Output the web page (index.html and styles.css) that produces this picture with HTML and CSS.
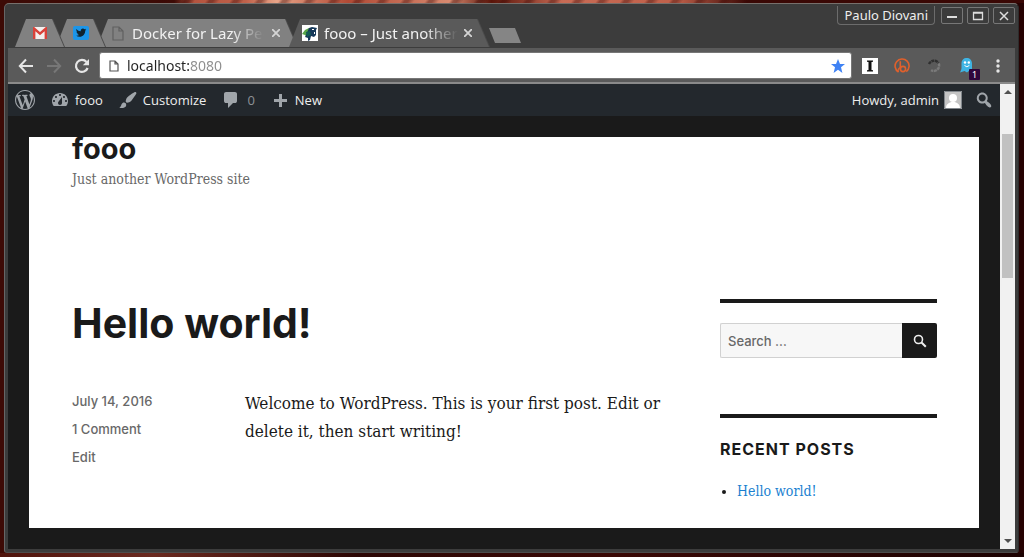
FILE: index.html
```
<!DOCTYPE html>
<html lang="en">
<head>
<meta charset="utf-8">
<meta name="viewport" content="width=device-width, initial-scale=1">
<title>fooo – Just another WordPress site</title>
<link rel="stylesheet" href="styles.css">
</head>
<body class="desktop">
<div class="window">
  <header class="titlebar">
    <ul class="tabs">
      <li class="tab tab-pinned"><a class="tab-shape" href="#" aria-label="Gmail">
        <svg width="14" height="12" viewBox="0 0 14 12"><rect width="14" height="12" rx="1" fill="#f3f0ee"/><path d="M1.2 12V1.6L7 6.6l5.800-5V12" fill="none" stroke="#d9423a" stroke-width="2.400"/></svg>
      </a></li>
      <li class="tab tab-pinned"><a class="tab-shape" href="#" aria-label="Twitter">
        <svg width="16" height="14" viewBox="0 0 16 14"><rect width="16" height="14" rx="2" fill="#1c95e8"/><path d="M3.400 3c1.200 1.400 2.700 2.200 4.400 2.300C7.500 3.500 8.700 2.500 9.900 2.500c.7 0 1.200.3 1.600.7l1.400-.5-.7 1.100 1.100-.2-1.100 1.200c.1 3.300-2.300 6-5.600 6-1.300 0-2.500-.3-3.500-1 1.200.1 2.200-.2 3.100-.8-1-.1-1.700-.7-1.900-1.500h.8C4.100 7.200 3.500 6.400 3.500 5.400l.8.2C3.300 4.900 3 3.900 3.400 3z" fill="#10242f"/></svg>
      </a></li>
      <li class="tab tab-wide"><div class="tab-shape">
        <svg width="12" height="15" viewBox="0 0 12 15" fill="none" stroke="#606060" stroke-width="1.200"><path d="M1 1h6l4 4v9H1zM7 1v4h4"/></svg>
        <a class="tab-title" href="#">Docker for Lazy People</a>
        <button class="tab-close" type="button" aria-label="Close tab"><svg width="8" height="8" viewBox="0 0 8 8"><path d="M0 0l8 8M8 0L0 8" stroke="#d4d4d4" stroke-width="1.800"/></svg></button>
      </div></li>
      <li class="tab tab-wide tab-active"><div class="tab-shape">
        <svg width="16" height="16" viewBox="0 0 16 16"><path fill="#fff" d="M0 0h16v16H0z"/><path d="M0 9l3-4 4-2 1 5-3 4-2-2z" fill="#58a548"/><path d="M7 3l3-1 5 1-1 2v5l-2 2-3-1-1 4-2 1v-3l-3-1 2-4z" fill="#16395a"/><path d="M4 7l4-1 1 4-4 2z" fill="#145b55"/><path d="M10 4h2v1h-2zM12 7h1v2h-1z" fill="#fff"/></svg>
        <a class="tab-title" href="#">fooo – Just another WordPress site</a>
        <button class="tab-close" type="button" aria-label="Close tab"><svg width="8" height="8" viewBox="0 0 8 8"><path d="M0 0l8 8M8 0L0 8" stroke="#d4d4d4" stroke-width="1.800"/></svg></button>
      </div></li>
      <li class="tab-new"><button class="new-tab" type="button" aria-label="New tab"></button></li>
    </ul>
    <div class="window-controls">
      <button class="profile" type="button">Paulo Diovani</button>
      <button class="win-button" type="button" aria-label="Minimize"><svg width="12" height="12" viewBox="0 0 12 12"><path d="M1 7h10" stroke="#ddd" stroke-width="2"/></svg></button>
      <button class="win-button" type="button" aria-label="Maximize"><svg width="12" height="12" viewBox="0 0 12 12"><path d="M1.500 2.500h9v7h-9zM1 3h10" fill="none" stroke="#ddd" stroke-width="1.300"/></svg></button>
      <button class="win-button" type="button" aria-label="Close"><svg width="12" height="12" viewBox="0 0 12 12"><path d="M2 2l8 8M10 2l-8 8" stroke="#ddd" stroke-width="1.500"/></svg></button>
    </div>
  </header>

  <div class="toolbar">
    <div class="nav-buttons">
      <button class="nav-button" type="button" aria-label="Back"><svg width="16" height="16" viewBox="0 0 16 16" fill="none" stroke="#e6e6e6" stroke-width="2"><path d="M15 8H2M8 1.500L1.800 8 8 14.500"/></svg></button>
      <button class="nav-button" type="button" aria-label="Forward"><svg width="16" height="16" viewBox="0 0 16 16" fill="none" stroke="#777" stroke-width="2"><path d="M1 8h13M8 1.500L14.200 8 8 14.500"/></svg></button>
      <button class="nav-button" type="button" aria-label="Reload"><svg width="16" height="16" viewBox="0 0 16 16"><path d="M13.600 10A6 6 0 1 1 12.500 4" fill="none" stroke="#e6e6e6" stroke-width="2.200"/><path d="M15 1v6.200H8.800z" fill="#e6e6e6"/></svg></button>
    </div>
    <div class="omnibox">
      <svg width="10" height="12" viewBox="0 0 10 12" fill="none" stroke="#555" stroke-width="1.200"><path d="M1 1h5l3 3v7H1zM6 1v3h3"/></svg>
      <input class="address" type="text" value="localhost:8080" aria-label="Address">
      <button class="bookmark" type="button" aria-label="Bookmark"><svg width="14" height="14" viewBox="0 0 14 14"><path d="M7 0l2 5h5l-4 3.300L11.400 14 7 10.700 2.600 14 4 8.300 0 5h5z" fill="#3f82f4"/></svg></button>
    </div>
    <div class="extensions">
      <button class="extension" type="button" aria-label="Instapaper"><svg width="16" height="16" viewBox="0 0 16 16"><path fill="#fff" d="M0 0h16v16H0z"/><path d="M5 2.500h6v1.200l-1.500.4v7.800l1.500.4v1.200H5v-1.200l1.500-.4V4.100L5 3.700z" fill="#111"/></svg></button>
      <button class="extension" type="button" aria-label="Bitly"><svg width="16" height="16" viewBox="0 0 16 16" fill="none" stroke="#e0602c" stroke-width="1.600"><path d="M4.500 14A7 7 0 1 1 12.300 13.600"/><path d="M6.300 3.200v8.500"/><circle cx="9" cy="11" r="2.600"/><path d="M4.500 14c-1-2 .2-4.200 1.800-4.500" stroke-width="1.200"/></svg></button>
      <button class="extension" type="button" aria-label="Loading"><svg width="16" height="16" viewBox="0 0 16 16" fill="none" stroke-width="2.400"><path d="M3 6A5.500 5.500 0 0 1 12.500 5" stroke="#303030" stroke-dasharray="3 .6"/><path d="M12.800 5.500A5.500 5.500 0 0 1 5 12.300" stroke="#7a7a7a" stroke-dasharray="3 .6"/></svg></button>
      <button class="extension" type="button" aria-label="Ghostery"><svg width="13" height="15" viewBox="0 0 13 15"><path d="M1.500 5.500C1.500 2 3.700 0 6.700 0S12 2 12 5.500V14l-2.500-1.500L7 14.500 4.500 13 0 14.500c1.200-2 1.500-3.500 1.500-5z" fill="#3fb4e4"/><circle cx="5" cy="4.500" r="1.200" fill="#fff"/><circle cx="8.800" cy="4.500" r="1.200" fill="#fff"/><path d="M4.500 7.500q2.400 2.500 4.800 0" stroke="#fff" fill="none"/></svg><span class="badge">1</span></button>
      <button class="extension" type="button" aria-label="Menu"><svg width="4" height="14" viewBox="0 0 4 14" fill="#e6e6e6"><circle cx="2" cy="2" r="1.700"/><circle cx="2" cy="7" r="1.700"/><circle cx="2" cy="12" r="1.700"/></svg></button>
    </div>
  </div>

  <div class="viewport">
    <div class="document">
      <nav class="adminbar" aria-label="Admin">
        <div class="admin-group">
          <a class="admin-item" href="#" aria-label="About WordPress"><svg width="20" height="20" viewBox="0 0 20 20"><path d="M20 10c0-5.510-4.490-10-10-10C4.480 0 0 4.490 0 10c0 5.520 4.480 10 10 10 5.510 0 10-4.480 10-10zM7.780 15.370L4.370 6.220c.55-.02 1.170-.08 1.170-.08.5-.06.44-1.130-.06-1.110 0 0-1.450.11-2.370.11-.18 0-.37 0-.58-.01C4.120 2.690 6.870 1.110 10 1.110c2.330 0 4.450.87 6.050 2.340-.68-.11-1.650.39-1.650 1.580 0 .74.45 1.360.9 2.100.35.61.55 1.360.55 2.460 0 1.490-1.400 5-1.400 5l-3.030-8.370c.54-.02.82-.17.82-.17.5-.05.44-1.250-.06-1.220 0 0-1.440.12-2.380.12-.87 0-2.330-.12-2.330-.12-.5-.03-.56 1.200-.06 1.220l.92.08 1.260 3.410zM17.410 10c.24-.64.74-1.870.43-4.250.7 1.290 1.050 2.710 1.050 4.250 0 3.290-1.730 6.240-4.400 7.780.97-2.590 1.940-5.200 2.920-7.780zM6.100 18.090C3.120 16.650 1.110 13.530 1.110 10c0-1.300.23-2.480.72-3.590C3.250 10.300 4.670 14.200 6.100 18.090zm4.030-6.630l2.580 6.980c-.86.29-1.760.45-2.710.45-.79 0-1.570-.11-2.290-.33.81-2.380 1.620-4.740 2.420-7.100z"/></svg></a>
          <a class="admin-item" href="#"><svg width="20" height="20" viewBox="0 0 20 20"><path fill-rule="evenodd" d="M3.760 16h12.480c1.100-1.370 1.760-3.110 1.760-5 0-4.420-3.580-8-8-8s-8 3.580-8 8c0 1.890.66 3.630 1.760 5zM10 4c.55 0 1 .45 1 1s-.45 1-1 1-1-.45-1-1 .45-1 1-1zM6 6c.55 0 1 .45 1 1s-.45 1-1 1-1-.45-1-1 .45-1 1-1zm8 0c.55 0 1 .45 1 1s-.45 1-1 1-1-.45-1-1 .45-1 1-1zm-5.370 5.550L12 7v6c0 1.100-.9 2-2 2s-2-.9-2-2c0-.57.24-1.080.63-1.450zM4 10c.55 0 1 .45 1 1s-.45 1-1 1-1-.45-1-1 .45-1 1-1zm12 0c.55 0 1 .45 1 1s-.45 1-1 1-1-.45-1-1 .45-1 1-1z"/></svg>fooo</a>
          <a class="admin-item" href="#"><svg width="20" height="20" viewBox="0 0 20 20"><path d="M18.330 3.570s.27-.8-.31-1.360c-.53-.52-1.220-.24-1.220-.24-.61.3-5.760 3.470-7.670 5.570-.86.96-2.060 3.790-1.090 4.820.92.98 3.960-.17 4.790-1 2.060-2.060 5.210-7.170 5.500-7.790zM1.400 17.650c2.370-1.560 1.460-3.410 3.230-4.640.93-.65 2.220-.62 3.080.29.63.67.8 2.570-.16 3.460-1.570 1.450-4 1.550-6.150.89z"/></svg>Customize</a>
          <a class="admin-item admin-count" href="#" aria-label="0 comments"><svg width="20" height="20" viewBox="0 0 20 20"><path d="M5 2h9q.82 0 1.410.59T16 4v7q0 .82-.59 1.410T14 13h-2l-5 5v-5H5q-.82 0-1.410-.59T3 11V4q0-.82.59-1.410T5 2z"/></svg>0</a>
          <a class="admin-item" href="#"><svg width="20" height="20" viewBox="0 0 20 20"><path d="M9 4h3v5h5v3h-5v5H9v-5H4V9h5z"/></svg>New</a>
        </div>
        <div class="admin-group admin-account">
          <a class="admin-item" href="#">Howdy, admin<svg class="avatar" width="18" height="18" viewBox="0 0 18 18"><path fill="#c4c4c4" d="M0 0h18v18H0z"/><path d="M.5.5h17v17H.5z" fill="none" stroke="#82878c"/><circle cx="9" cy="7" r="4" fill="#fff"/><path d="M2 17c0-4 3-5 5-6h4c2 1 5 2 5 6z" fill="#fff"/></svg></a>
          <button class="admin-item" type="button" aria-label="Search"><svg width="20" height="20" viewBox="0 0 20 20"><path d="M12.140 4.180c1.870 1.870 2.110 4.750.72 6.890.12.1.22.21.36.31.2.16.47.36.81.59.34.24.56.39.66.47.42.31.73.57.94.78.32.32.6.65.84 1 .25.35.44.69.59 1.040.14.35.21.68.18 1-.02.32-.14.59-.36.81s-.49.34-.81.36c-.31.02-.65-.04-.99-.19-.35-.14-.7-.34-1.040-.59-.35-.24-.68-.52-1-.84-.21-.21-.47-.52-.77-.93-.1-.13-.25-.35-.47-.66-.22-.32-.4-.57-.56-.78-.16-.2-.29-.35-.44-.5-2.070 1.090-4.690.76-6.440-.98-2.140-2.150-2.140-5.640 0-7.780 2.150-2.150 5.630-2.150 7.780 0zm-1.410 6.360c1.360-1.370 1.360-3.580 0-4.950-1.370-1.370-3.590-1.370-4.950 0-1.370 1.370-1.370 3.580 0 4.950 1.360 1.370 3.580 1.370 4.950 0z"/></svg></button>
        </div>
      </nav>

      <div class="site-frame">
        <div class="site">
          <header class="site-header">
            <p class="site-title"><a href="#">fooo</a></p>
            <p class="tagline">Just another WordPress site</p>
          </header>
          <div class="columns">
            <main class="post">
              <h1 class="post-title"><a href="#">Hello world!</a></h1>
              <div class="post-body">
                <ul class="post-meta">
                  <li><a href="#">July 14, 2016</a></li>
                  <li><a href="#">1 Comment</a></li>
                  <li><a href="#">Edit</a></li>
                </ul>
                <p class="post-text">Welcome to WordPress. This is your first post. Edit or delete it, then start writing!</p>
              </div>
            </main>
            <aside class="sidebar">
              <section class="widget">
                <form class="search" role="search">
                  <input class="search-field" type="search" placeholder="Search …" aria-label="Search for">
                  <button class="search-submit" type="button" aria-label="Search"><svg width="14" height="14" viewBox="0 0 14 14" fill="none" stroke="#eee"><circle cx="5.500" cy="5.500" r="4" stroke-width="1.600"/><path d="M8.500 8.500l4.300 4.300" stroke-width="2"/></svg></button>
                </form>
              </section>
              <section class="widget">
                <h2 class="widget-title">Recent Posts</h2>
                <ul class="recent">
                  <li><a href="#">Hello world!</a></li>
                </ul>
              </section>
            </aside>
          </div>
        </div>
      </div>
    </div>
    <div class="scrollbar" aria-hidden="true">
      <svg width="8" height="4" viewBox="0 0 8 4"><path d="M0 4l4-4 4 4z" fill="#505050"/></svg>
      <div class="scroll-track"><div class="scroll-thumb"></div></div>
      <svg width="8" height="4" viewBox="0 0 8 4"><path d="M0 0l4 4 4-4z" fill="#505050"/></svg>
    </div>
  </div>
</div>
</body>
</html>
```
FILE: styles.css
```
:root {
  --ui: "Noto Sans", "Open Sans", sans-serif;
  --heading: Inter, "Open Sans", sans-serif;
  --prose: "DejaVu Serif Condensed", "DejaVu Serif", serif;
  --ink: #1a1a1a;
  --muted: #686868;
  --link: #1a7fd0;
}

* {
  box-sizing: border-box;
}

button {
  padding: 0;
  border: 0;
  background: none;
  color: inherit;
  font: inherit;
}

a {
  color: inherit;
  text-decoration: none;
}

ul {
  margin: 0;
  padding: 0;
  list-style: none;
}

svg {
  flex: none;
  display: block;
}

.desktop {
  display: flex;
  min-height: 100vh;
  margin: 0;
  padding: 3px 5px 4px 4px;
  background:
    repeating-linear-gradient(125deg, #0000 0 9px, #3a080566 12px 15px, #0000 20px) top / 100% 3px no-repeat,
    linear-gradient(90deg, #3d0b06 17%, #b5543f 19%, #c0614a 24%, #e8a488 27%, #b14a35 34%, #d88a70 44%, #5a1409 48%, #c86b55 55%, #c0604a 66%, #3a0805 73%) top / 100% 3px no-repeat,
    linear-gradient(90deg, #4f130c, #6b2a20 15%, #2c0604 35%, #3a0805 60%, #1c0202) bottom / 100% 4px no-repeat,
    linear-gradient(90deg, #3d0a05, #260202);
}

.window {
  display: flex;
  flex: 1;
  flex-direction: column;
  min-width: 0;
  padding: 0 3px 3px;
  border: 1px solid;
  border-color: #77706c #2c2c2c #4c4c4c #666;
  border-radius: 5px 5px 3px 3px;
  background: #3c3c3c;
}

.titlebar {
  display: flex;
  align-items: flex-start;
  justify-content: space-between;
  min-height: 43px;
  font-family: var(--ui);
}

.tabs {
  display: flex;
  min-width: 0;
  padding: 15px 0 0 7px;
}

.tab {
  position: relative;
  z-index: 1;
  margin-right: -8px;
  filter: drop-shadow(1px 0 0 #4a4a4a);
}

.tab:nth-child(1) {
  z-index: 3;
}

.tab:nth-child(2) {
  z-index: 2;
}

.tab-active {
  z-index: 4;
}

.tab-shape {
  display: flex;
  align-items: center;
  justify-content: center;
  height: 28px;
  background: #818181;
  clip-path: polygon(11px 0, calc(100% - 12px) 0, 100% 100%, 0 100%);
}

.tab-pinned {
  width: 49px;
}

.tab-wide {
  width: 200px;
  min-width: 0;
}

.tab-wide .tab-shape {
  gap: 8px;
  padding: 0 17px 0 15px;
}

.tab-active .tab-shape {
  gap: 6px;
  padding-left: 13px;
  background: #5a5a5a;
}

.tab-title {
  flex: 1;
  overflow: hidden;
  color: #f2f2f2;
  font-size: 15px;
  line-height: 20px;
  white-space: nowrap;
  -webkit-mask-image: linear-gradient(90deg, #000 75%, #0000);
  mask-image: linear-gradient(90deg, #000 75%, #0000);
}

.tab-new {
  padding: 7px 0 0 8px;
}

.new-tab {
  width: 32px;
  height: 15px;
  background: #858585;
  clip-path: polygon(0 0, 26px 0, 100% 100%, 6px 100%);
}

.window-controls {
  display: flex;
  align-items: center;
  gap: 4px;
  padding-top: 2px;
  color: #eee;
  font-size: 13px;
}

.profile {
  height: 19px;
  margin-right: 2px;
  padding: 0 6px;
  border: 1px solid #6c6c6c;
  border-top: 0;
  border-radius: 0 0 4px 4px;
  line-height: 16px;
}

.win-button {
  display: grid;
  place-items: center;
  width: 22px;
  height: 17px;
  border: 1px solid #777;
  border-radius: 2px;
}

.toolbar {
  display: flex;
  align-items: center;
  gap: 2px;
  padding: 4px 1px 3px 10px;
  border-bottom: 2px solid #8a8a8a;
  background: #5a5a5a;
}

.nav-buttons {
  display: flex;
  gap: 12px;
  margin-right: 7px;
}

.omnibox {
  display: flex;
  flex: 1;
  align-items: center;
  gap: 8px;
  height: 27px;
  padding: 0 6px 0 9px;
  border: 1px solid #777;
  border-radius: 3px;
  background: #fff;
}

.address {
  flex: 1;
  min-width: 0;
  padding: 0;
  border: 0;
  outline: 0;
  background: linear-gradient(90deg, #222 62px, #8c8c8c 62px);
  -webkit-background-clip: text;
  background-clip: text;
  color: transparent;
  font: 14px/20px var(--ui);
}

.extensions {
  display: flex;
}

.extension {
  position: relative;
  display: grid;
  place-items: center;
  width: 32px;
  height: 24px;
}

.badge {
  position: absolute;
  right: 2px;
  bottom: -2px;
  width: 11px;
  border-radius: 1px;
  background: #2f063c;
  color: #fff;
  font: 9px/11px var(--ui);
}

.viewport {
  display: flex;
  flex: 1;
}

.document {
  display: flex;
  flex: 1;
  flex-direction: column;
  min-width: 0;
  background: var(--ink);
}

.adminbar {
  display: flex;
  justify-content: space-between;
  padding: 0 6px 0 7px;
  background: #23282d;
  color: #eee;
  font: 13px/32px "Open Sans", sans-serif;
}

.admin-group {
  display: flex;
  gap: 15px;
}

.admin-account {
  gap: 12px;
}

.admin-item {
  display: flex;
  align-items: center;
  gap: 5px;
}

.admin-item svg {
  fill: #a0a5aa;
}

.admin-count {
  gap: 6px;
  color: #8d9196;
}

.site-frame {
  display: flex;
  flex: 1;
  padding: 21px;
}

.site {
  flex: 1;
  min-width: 0;
  padding: 0 42px 20px 43px;
  background: #fff;
  color: var(--ink);
}

.site-title {
  margin: 0;
  font: 700 29px/24px var(--heading);
}

.tagline {
  margin: 8px 0 110px;
  color: var(--muted);
  font: 14px/20px var(--prose);
}

.columns {
  display: grid;
  grid-template-columns: minmax(0, 1fr) 217px;
  gap: 44px;
}

.post-title {
  margin: 0 0 40px;
  font: 700 41px/48px var(--heading);
}

.post-body {
  display: grid;
  grid-template-columns: 173px minmax(0, 1fr);
}

.post-meta {
  color: var(--muted);
  font: 500 13px/28px var(--heading);
}

.post-text {
  margin: 0;
  padding-top: 2px;
  font: 17px/28px var(--prose);
}

.widget {
  margin-bottom: 56px;
  padding-top: 20px;
  border-top: 4px solid var(--ink);
}

.widget:last-child {
  margin-bottom: 0;
}

.search {
  display: flex;
  height: 35px;
}

.search-field {
  flex: 1;
  min-width: 0;
  padding: 0 7px;
  border: 1px solid #d1d1d1;
  border-right: 0;
  border-radius: 2px 0 0 2px;
  background: #f7f7f7;
  font: 500 13px/20px var(--heading);
}

.search-field::placeholder {
  color: var(--muted);
}

.search-submit {
  display: grid;
  place-items: center;
  width: 35px;
  border-radius: 0 2px 2px 0;
  background: var(--ink);
}

.widget-title {
  margin: 0 0 20px;
  font: 700 16px/22px var(--heading);
  letter-spacing: 1px;
  text-transform: uppercase;
}

.recent {
  padding-left: 17px;
  list-style: disc;
  font: 14px/22px var(--prose);
}

.recent a {
  color: var(--link);
}

.scrollbar {
  display: flex;
  flex-direction: column;
  align-items: center;
  width: 15px;
  padding: 6px 2px;
  background: #f1f1f1;
}

.scroll-track {
  flex: 1;
  align-self: stretch;
  padding: 40px 0;
}

.scroll-thumb {
  height: 39%;
  min-height: 144px;
  background: #c1c1c1;
}
```
